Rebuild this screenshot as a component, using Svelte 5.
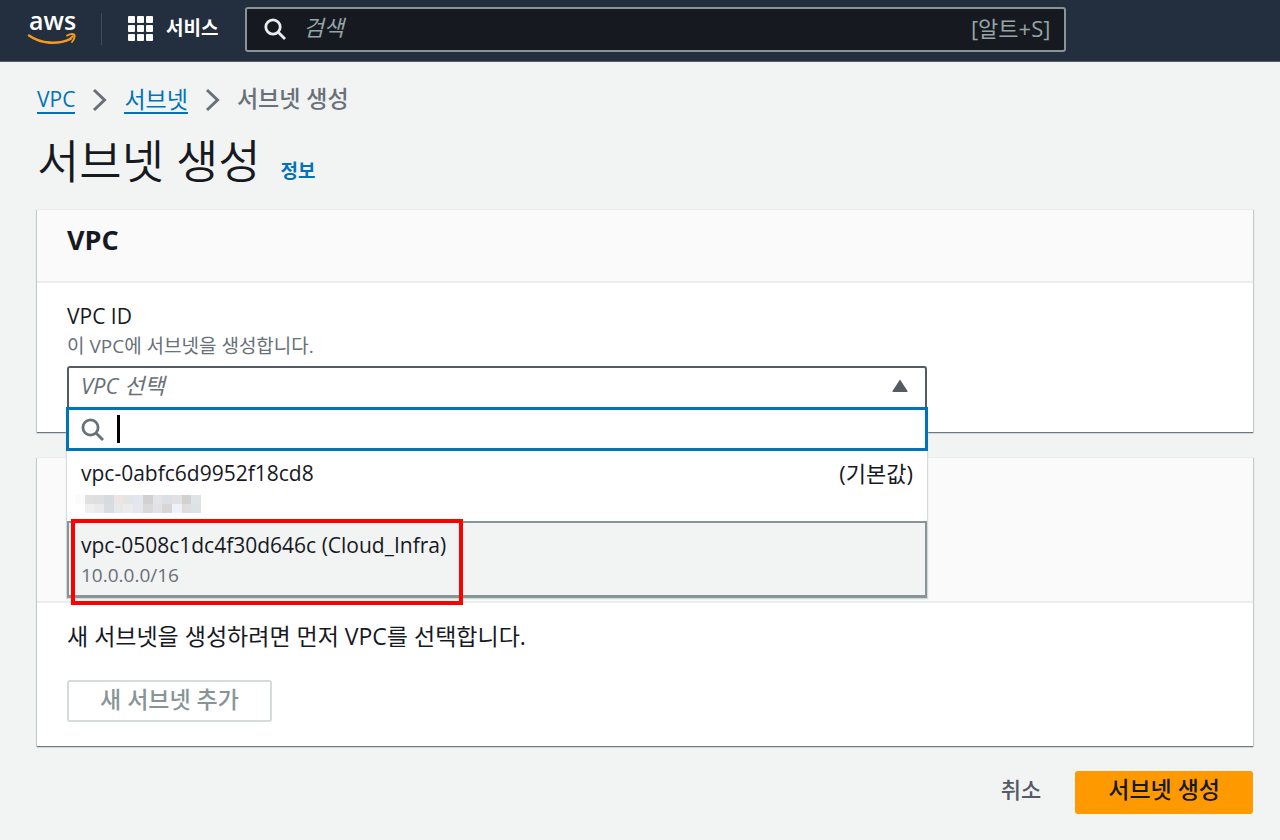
<script>
    let keyword = '';
    let filter = '';

    const crumbs = [
        { label: 'VPC', href: '#vpc', latin: true },
        { label: '서브넷', href: '#subnets' }
    ];

    const vpcs = [
        { id: 'vpc-0abfc6d9952f18cd8', tag: '(기본값)', cidr: null, active: false },
        { id: 'vpc-0508c1dc4f30d646c (Cloud_Infra)', tag: '', cidr: '10.0.0.0/16', active: true }
    ];

    // masked CIDR block, two rows of tiles
    const mask = [
        '#fafafa', '#e0e0e0', '#dedfe0', '#d6dbe1', '#ede5e3', '#e1e6e5', '#e3e6ee',
        '#d2d0d1', '#e1e5e8', '#dae0e5', '#e2e1e0', '#d1d1d1', '#dfe4e7',
        '#ffffff', '#eeefef', '#ebe9e9', '#d8dce3', '#e7e8e8', '#ebecec', '#e5e6ee',
        '#d9d8db', '#e3e3e6', '#d8d6d5', '#edf3f9', '#e1dddc', '#dce2e5'
    ];
</script>

<header class="topnav">
    <a class="logo" href="#home" aria-label="aws">
        <svg width="50" height="56" viewBox="0 0 50 56">
            <text x="2" y="29" class="logo-text">aws</text>
            <path d="M2 34.500C14 43 31 44 43.500 37.800" fill="none" stroke="#f79a1c" stroke-width="2.600" stroke-linecap="round" />
            <path d="M40 34.600c3-1.600 6-1.700 7.300-1.100.7 1.800-.4 5.100-2.300 7.500" fill="none" stroke="#f79a1c" stroke-width="1.900" stroke-linecap="round" stroke-linejoin="round" />
            <path d="M43 37.800l3.500-3" fill="none" stroke="#f79a1c" stroke-width="1.900" />
        </svg>
    </a>
    <button class="services">
        <svg width="26" height="26" viewBox="0 0 26 26" fill="#fff">
            {#each [0, 9, 18] as y}
                {#each [0, 9, 18] as x}
                    <rect {x} {y} width="7" height="7" rx="1" />
                {/each}
            {/each}
        </svg>
        <span>서비스</span>
    </button>
    <label class="search">
        <svg width="22" height="22" viewBox="0 0 22 22" fill="none" stroke="#eaeded" stroke-width="2.8">
            <circle cx="9" cy="9" r="7.2" />
            <path d="M14 14l7 7" />
        </svg>
        <input type="text" placeholder="검색" aria-label="검색" bind:value={keyword} />
        <span class="shortcut">[알트+S]</span>
    </label>
</header>

<main>
    <nav class="crumbs">
        {#each crumbs as crumb}
            <a href={crumb.href} class:latin={crumb.latin}>{crumb.label}</a>
            <svg width="15" height="24" viewBox="0 0 15 24" fill="none" stroke="#687078" stroke-width="3">
                <path d="M2 2l10.500 10-10.500 10" />
            </svg>
        {/each}
        <span class="current">서브넷 생성</span>
    </nav>

    <div class="title">
        <h1>서브넷 생성</h1>
        <a href="#info">정보</a>
    </div>

    <section class="card">
        <div class="card-head">
            <h2>VPC</h2>
        </div>
        <div class="card-body vpc-body">
            <label class="field-label" for="vpc-id">VPC ID</label>
            <p class="hint">이 VPC에 서브넷을 생성합니다.</p>
            <div class="picker">
                <select id="vpc-id">
                    <option>VPC 선택</option>
                </select>
                <svg class="arrow" width="16" height="14" viewBox="0 0 16 14" fill="#545b64">
                    <path d="M8 0.500L15.500 12q.5 1-.6 1H1.100q-1.100 0-.6-1z" />
                </svg>
                <div class="dropdown">
                    <label class="filter">
                        <svg width="23" height="23" viewBox="0 0 23 23" fill="none" stroke="#687078" stroke-width="2.800">
                            <circle cx="9.500" cy="9.500" r="7.600" />
                            <path d="M15 15l7 7" />
                        </svg>
                        <span class="caret"></span>
                        <input type="text" aria-label="VPC" bind:value={filter} />
                    </label>
                    <ul role="listbox" aria-label="VPC ID">
                        {#each vpcs as vpc}
                            <li role="option" aria-selected={vpc.active} class:active={vpc.active}>
                                <div class="row">
                                    <span>{vpc.id}</span>
                                    <span class="tag">{vpc.tag}</span>
                                </div>
                                {#if vpc.cidr}
                                    <div class="cidr">{vpc.cidr}</div>
                                {:else}
                                    <div class="mask">
                                        {#each mask as color}
                                            <i style="background: {color}"></i>
                                        {/each}
                                    </div>
                                {/if}
                                {#if vpc.active}
                                    <div class="marker"></div>
                                {/if}
                            </li>
                        {/each}
                    </ul>
                </div>
            </div>
        </div>
    </section>

    <section class="card">
        <div class="card-head tall"></div>
        <div class="card-body subnet-body">
            <p>새 서브넷을 생성하려면 먼저 VPC를 선택합니다.</p>
            <button class="add" disabled>새 서브넷 추가</button>
        </div>
    </section>

    <div class="actions">
        <button class="cancel">취소</button>
        <button class="primary">서브넷 생성</button>
    </div>
</main>

<style>
    :global(body) {
        background: #f2f3f3;
        color: #16191f;
        font-family: "Open Sans", "Noto Sans CJK KR", sans-serif;
        font-size: 22px;
        line-height: 30px;
    }

    header, main, header *, main * {
        box-sizing: border-box;
    }

    button, input, select {
        font: inherit;
        color: inherit;
        border: 0;
        padding: 0;
        margin: 0;
        background: none;
        outline: 0;
    }

    svg {
        display: block;
        flex-shrink: 0;
    }

    h1, h2, p, ul {
        margin: 0;
        padding: 0;
    }

    .topnav {
        display: flex;
        align-items: center;
        height: 62px;
        padding: 0 27px 3px;
        background: #232f3e;
        border-bottom: 1px solid #545b64;
    }

    .logo {
        padding-right: 24px;
    }

    .logo-text {
        font-size: 25px;
        font-weight: 600;
        fill: #fff;
    }

    .services {
        display: flex;
        align-items: center;
        gap: 12px;
        height: 32px;
        padding: 0 27px 0 26px;
        border-left: 1px solid #414d5c;
        color: #fff;
        font-size: 19px;
        font-weight: 700;
        white-space: nowrap;
    }

    .services span {
        padding-bottom: 2px;
    }

    .search {
        display: flex;
        flex: 1;
        align-items: center;
        gap: 17px;
        max-width: 821px;
        height: 45px;
        padding: 0 14px 0 17px;
        background: #16191f;
        border: 2px solid #879596;
        border-radius: 3px;
        color: #95a5a6;
    }

    .search input {
        flex: 1;
        min-width: 0;
        padding-bottom: 4px;
    }

    .search input::placeholder {
        color: #95a5a6;
        font-style: italic;
        opacity: 1;
    }

    .shortcut {
        padding-bottom: 2px;
    }

    main {
        padding: 22px 27px 26px 37px;
    }

    .crumbs {
        display: flex;
        align-items: center;
        gap: 17px;
        height: 32px;
        color: #687078;
    }

    .crumbs a {
        line-height: 26px;
        color: #0073bb;
        text-decoration: none;
        border-bottom: 2px solid #0073bb;
        font-size: 23px;
    }

    .crumbs .latin {
        font-size: 21px;
    }

    .current {
        padding-bottom: 4px;
        font-size: 23px;
        font-weight: 500;
    }

    .title {
        display: flex;
        align-items: baseline;
        gap: 20px;
        padding: 12px 0 17px;
    }

    h1 {
        font-size: 46px;
        font-weight: 350;
        line-height: 64px;
    }

    .title a {
        color: #0073bb;
        font-size: 19px;
        font-weight: 700;
        text-decoration: none;
    }

    .card {
        margin-bottom: 25px;
        background: #fff;
        border-top: 1px solid #eaeded;
        box-shadow: 0 1px 1px #6b7a80, 1px 1px 1px #d5dbdb, -1px 1px 1px #d5dbdb;
    }

    .card-head {
        padding: 14px 30px 25px;
        background: #fafafa;
        border-bottom: 2px solid #eaeded;
    }

    .card-head.tall {
        height: 145px;
    }

    h2 {
        font-size: 27px;
        font-weight: 700;
        line-height: 32px;
    }

    .card-body {
        padding: 18px 30px 24px;
    }

    .field-label {
        display: block;
        font-size: 21px;
    }

    .hint {
        padding-bottom: 5px;
        color: #687078;
        font-size: 19px;
    }

    .picker {
        position: relative;
        max-width: 860px;
    }

    select {
        display: block;
        width: 100%;
        height: 42px;
        padding: 0 12px 6px;
        appearance: none;
        border: 2px solid #545b64;
        border-bottom: 0;
        border-radius: 3px 3px 0 0;
        color: #687078;
        font-style: italic;
    }

    .arrow {
        position: absolute;
        top: 13px;
        right: 19px;
    }

    .dropdown {
        position: absolute;
        z-index: 1;
        top: 41px;
        left: 0;
        right: 0;
        background: #fff;
        box-shadow: 1px 1px 1px #d5dbdb, -1px 1px 1px #d5dbdb;
    }

    .filter {
        display: flex;
        align-items: center;
        gap: 13px;
        height: 44px;
        margin: 0 -1px;
        padding: 0 12px;
        border: 3px solid #0073bb;
    }

    .caret {
        width: 3px;
        height: 28px;
        background: #000;
    }

    .filter input {
        flex: 1;
        min-width: 0;
    }

    ul {
        list-style: none;
    }

    li {
        position: relative;
        height: 70px;
        padding: 7px 14px;
    }

    li.active {
        height: 77px;
        padding: 7px 12px;
        background: #f2f3f3;
        border: 2px solid #879596;
        border-bottom-width: 3px;
    }

    .row {
        display: flex;
        justify-content: space-between;
        font-size: 21px;
    }

    .tag {
        font-size: 22px;
    }

    .cidr {
        color: #687078;
        font-size: 19px;
    }

    .mask {
        display: grid;
        grid-template-columns: repeat(13, 1fr);
        grid-auto-rows: 9px;
        width: 126px;
        margin: 7px -6px;
    }

    .marker {
        position: absolute;
        top: -4px;
        left: 2px;
        width: 392px;
        height: 86px;
        border: 4px solid #f00;
    }

    .subnet-body p {
        font-size: 23px;
        padding-bottom: 29px;
    }

    .add {
        display: block;
        height: 42px;
        padding: 0 31px 4px;
        border: 2px solid #d5dbdb;
        border-radius: 3px;
        color: #879596;
        font-size: 23px;
        font-weight: 500;
    }

    .actions {
        display: flex;
        justify-content: flex-end;
        gap: 34px;
        font-weight: 500;
    }

    .cancel {
        padding-bottom: 7px;
        color: #545b64;
    }

    .primary {
        height: 43px;
        padding: 0 33px 7px;
        background: #ff9900;
        border-radius: 3px;
        font-size: 23px;
    }
</style>
